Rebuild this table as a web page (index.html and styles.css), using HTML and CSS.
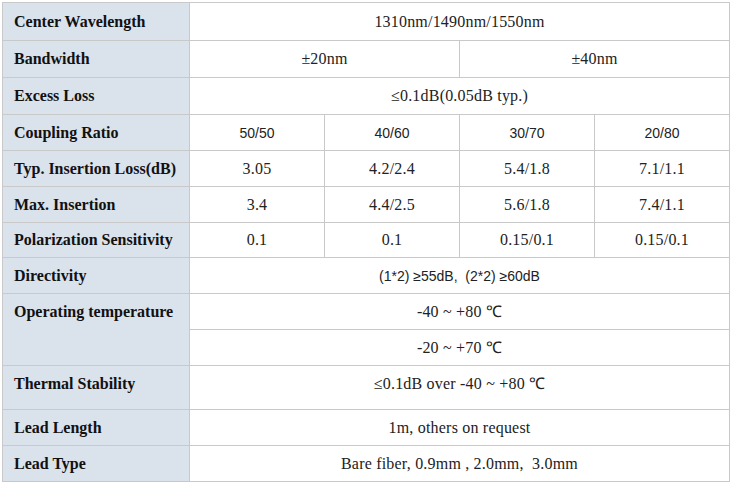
FILE: index.html
```html
<!DOCTYPE html>
<html lang="en">
<head>
    <meta charset="UTF-8">
    <title>Coupler Specifications</title>
    <link rel="stylesheet" href="styles.css">
</head>
<body>
    <table class="spec">
        <colgroup>
            <col class="col-label">
            <col class="col-val">
            <col class="col-val">
            <col class="col-val">
            <col class="col-val">
        </colgroup>
        <tr class="r-first">
            <th>Center Wavelength</th>
            <td colspan="4">1310nm/1490nm/1550nm</td>
        </tr>
        <tr>
            <th>Bandwidth</th>
            <td colspan="2">±20nm</td>
            <td colspan="2">±40nm</td>
        </tr>
        <tr>
            <th>Excess Loss</th>
            <td colspan="4">≤0.1dB(0.05dB typ.)</td>
        </tr>
        <tr class="r-short">
            <th>Coupling Ratio</th>
            <td class="sans">50/50</td>
            <td class="sans">40/60</td>
            <td class="sans">30/70</td>
            <td class="sans">20/80</td>
        </tr>
        <tr class="r-short">
            <th>Typ. Insertion Loss(dB)</th>
            <td>3.05</td>
            <td>4.2/2.4</td>
            <td>5.4/1.8</td>
            <td>7.1/1.1</td>
        </tr>
        <tr class="r-short">
            <th>Max. Insertion</th>
            <td>3.4</td>
            <td>4.4/2.5</td>
            <td>5.6/1.8</td>
            <td>7.4/1.1</td>
        </tr>
        <tr class="r-tight">
            <th>Polarization Sensitivity</th>
            <td>0.1</td>
            <td>0.1</td>
            <td>0.15/0.1</td>
            <td>0.15/0.1</td>
        </tr>
        <tr class="r-short">
            <th>Directivity</th>
            <td colspan="4" class="sans">(1*2) ≥55dB,&nbsp; (2*2) ≥60dB</td>
        </tr>
        <tr class="r-short">
            <th rowspan="2" class="top">Operating temperature</th>
            <td colspan="4">-40 ~ +80 ℃</td>
        </tr>
        <tr class="r-short">
            <td colspan="4">-20 ~ +70 ℃</td>
        </tr>
        <tr class="r-tall">
            <th>Thermal Stability</th>
            <td colspan="4">≤0.1dB over -40 ~ +80 ℃</td>
        </tr>
        <tr class="r-short">
            <th>Lead Length</th>
            <td colspan="4">1m, others on request</td>
        </tr>
        <tr class="r-short">
            <th>Lead Type</th>
            <td colspan="4">Bare fiber, 0.9mm , 2.0mm,&nbsp; 3.0mm</td>
        </tr>
    </table>
</body>
</html>
```

FILE: styles.css
```css
body {
    margin: 0;
    padding: 2px;
    background-color: #ffffff;
    font-family: "Liberation Serif", "Times New Roman", serif;
    font-size: 16px;
    color: #222222;
}
.spec {
    border-collapse: collapse;
    table-layout: fixed;
    width: 728px;
}
.col-label {
    width: 187px;
}
.spec th,
.spec td {
    border: 1px solid #c9c9c9;
    padding: 0;
    height: 36px;
    line-height: 18px;
    vertical-align: middle;
}
.spec th {
    background-color: #dae2ec;
    color: #111111;
    font-weight: bold;
    text-align: left;
    padding-left: 11px;
}
.spec td {
    text-align: center;
    letter-spacing: 0.2px;
}
.spec .r-first th,
.spec .r-first td {
    height: 37px;
}
.spec .r-short th,
.spec .r-short td {
    height: 35px;
}
.spec .r-tight th,
.spec .r-tight td {
    height: 34px;
}
.spec .r-tall th,
.spec .r-tall td {
    height: 44px;
    vertical-align: top;
    padding-top: 9px;
    box-sizing: border-box;
}
.spec th.top {
    vertical-align: top;
    padding-top: 9px;
}
.spec .sans {
    font-family: "Liberation Sans", Arial, sans-serif;
    font-size: 14px;
    letter-spacing: 0;
    color: #222222;
}
```
